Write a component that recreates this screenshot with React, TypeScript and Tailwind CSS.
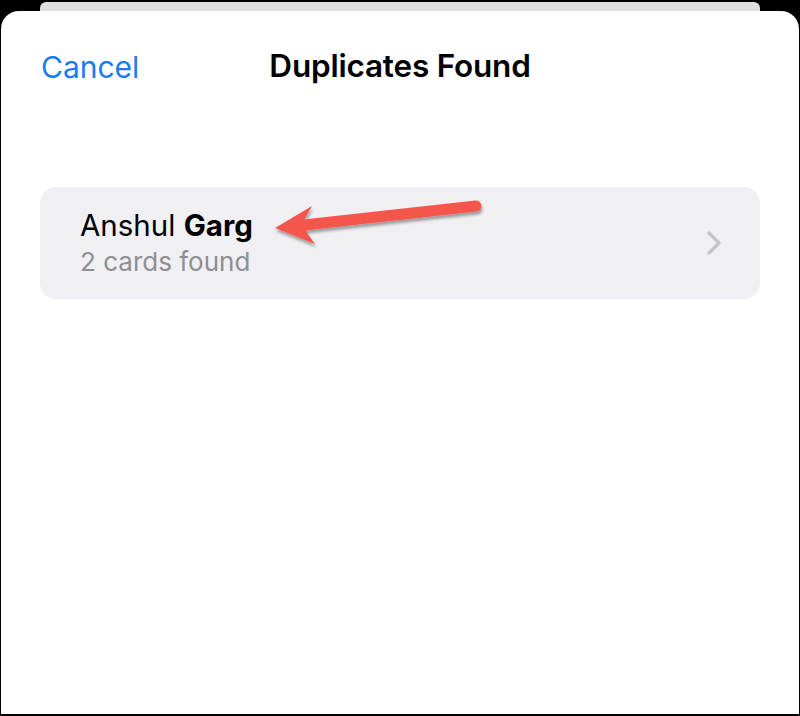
import React from "react";

export default function App() {
  return (
    <div
      className="w-[800px] h-[716px] bg-black flex flex-col overflow-hidden"
      style={{ fontFamily: "Inter, 'Liberation Sans', sans-serif" }}
    >
      <div className="h-[2px] shrink-0" />
      <div className="mx-[40px] h-[9px] shrink-0 bg-[#dfdfdf] rounded-t-[6px]" />
      <div className="relative ml-[1px] mr-[1px] mb-[2px] flex-1 bg-white rounded-t-[18px] flex flex-col">
        <div className="relative h-[100px] flex items-start">
          <div className="absolute left-[40px] top-[36px] text-[30px] leading-[40px] text-[#1b7cf2]">
            Cancel
          </div>
          <div className="w-full text-center pt-[35px] text-[31.5px] leading-[40px] font-semibold text-black tracking-[-0.2px]">
            Duplicates Found
          </div>
        </div>
        <div className="mx-[39px] mt-[76px] h-[112px] rounded-[16px] bg-[#efeff4] flex items-center pl-[40px] pr-[38px]">
          <div className="flex-1 flex flex-col">
            <div className="text-[29.5px] leading-[37px] text-black">
              Anshul <span className="font-bold">Garg</span>
            </div>
            <div className="text-[26px] leading-[34px] text-[#8e8e93] mt-[1px]">2 cards found</div>
          </div>
          <svg width="16" height="26" viewBox="0 0 16 26" className="shrink-0">
            <path d="M3 3 L13 13 L3 23" fill="none" stroke="#c4c4c8" strokeWidth="3.2" strokeLinecap="round" strokeLinejoin="round" />
          </svg>
        </div>
        <svg
          className="absolute left-[259px] top-[180px]"
          width="240"
          height="60"
          viewBox="0 0 240 60"
        >
          <defs>
            <filter id="sh" x="-20%" y="-50%" width="140%" height="200%">
              <feDropShadow dx="1" dy="3" stdDeviation="1.6" floodColor="#000" floodOpacity="0.35" />
            </filter>
          </defs>
          <g filter="url(#sh)" fill="#f4574b" stroke="none">
            <line x1="44" y1="34" x2="216" y2="15" stroke="#f4574b" strokeWidth="11" strokeLinecap="round" />
            <polygon points="15,37 52,15 44,29 47,42 55,53" />
          </g>
        </svg>
      </div>
    </div>
  );
}
